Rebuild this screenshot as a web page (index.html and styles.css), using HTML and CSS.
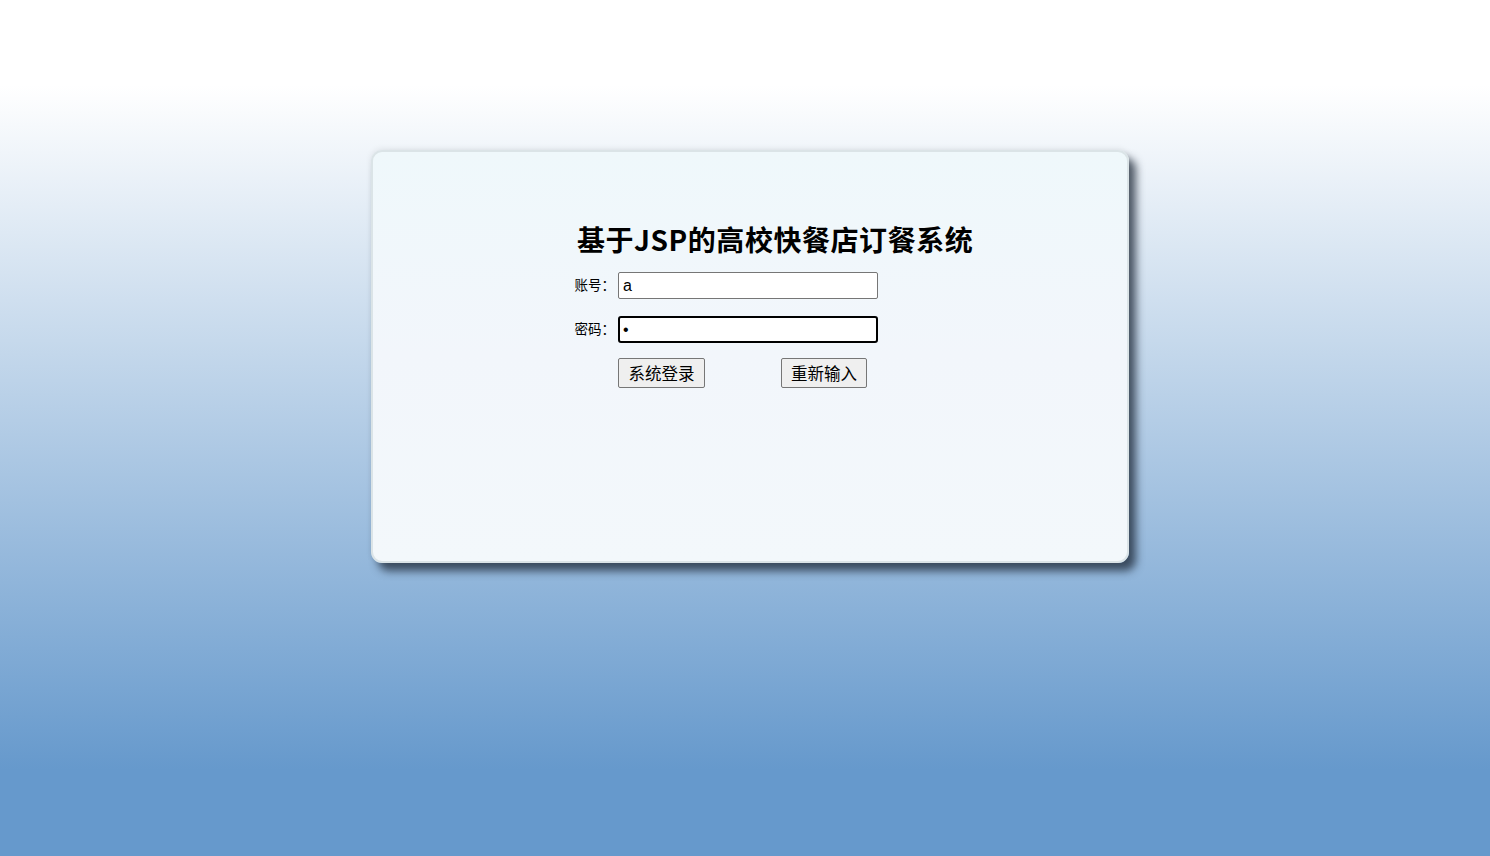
FILE: index.html
```html
<!DOCTYPE html>
<html lang="zh-CN">
<head>
<meta charset="utf-8">
<title>基于JSP的高校快餐店订餐系统</title>
<link rel="stylesheet" href="styles.css">
</head>
<body>
<div class="page">
  <div class="card">
    <h1 class="title">基于JSP的高校快餐店订餐系统</h1>
    <form class="form">
      <label class="label" for="user">账号：</label>
      <input class="field" id="user" type="text" value="a">
      <label class="label" for="pwd">密码：</label>
      <input class="field focused" id="pwd" type="password" value="a">
      <span></span>
      <div class="actions">
        <button class="btn" type="button">系统登录</button>
        <button class="btn" type="reset">重新输入</button>
      </div>
    </form>
  </div>
</div>
</body>
</html>
```
FILE: styles.css
```css
html, body {
  margin: 0;
  padding: 0;
}
body {
  font-family: "Noto Sans CJK SC", "Liberation Sans", sans-serif;
  background: linear-gradient(to bottom, #ffffff 0px, #ffffff 85px, #6699cc 770px, #6699cc 856px);
  min-height: 856px;
}
.page {
  height: 856px;
  padding-top: 150px;
  box-sizing: border-box;
}
.card {
  margin-left: 371px;
  width: 758px;
  height: 413px;
  box-sizing: border-box;
  border: 2px solid #dbe4e7;
  border-radius: 11px;
  background: linear-gradient(to bottom, #eff8fb 0%, #f2f6fb 50%, #f3f8fb 100%);
  box-shadow: 7px 8px 8px rgba(30, 40, 55, 0.75), 0 -1px 6px rgba(0, 0, 0, 0.08);
  padding-top: 69px;
}
.title {
  margin: 0;
  padding-left: 204px;
  font-size: 28px;
  line-height: 36px;
  font-weight: bold;
  color: #000;
  letter-spacing: 0.55px;
  white-space: nowrap;
}
.form {
  margin-top: 15px;
  margin-left: 195px;
  display: grid;
  grid-template-columns: 50px 260px;
  row-gap: 17px;
  align-items: center;
}
.label {
  font-size: 13.5px;
  color: #000;
  text-align: right;
  padding-right: 3px;
  padding-bottom: 3px;
  white-space: nowrap;
  line-height: 16px;
}
.field {
  width: 260px;
  height: 27px;
  box-sizing: border-box;
  border: 1px solid #767676;
  border-radius: 2px;
  background: #fff;
  font-family: "Liberation Sans", "Noto Sans CJK SC", sans-serif;
  font-size: 16px;
  padding: 1px 4px;
  margin: 0;
  color: #000;
}
.field.focused {
  border: 2px solid #000;
  border-radius: 3px;
  padding: 0 3px;
}
.actions {
  display: flex;
  gap: 76px;
  margin-top: -2px;
}
.btn {
  width: 87px;
  height: 30px;
  box-sizing: border-box;
  background: #efefef;
  border: 1px solid #767676;
  border-radius: 2px;
  font-family: "Noto Sans CJK SC", sans-serif;
  font-size: 16.5px;
  padding: 0;
  color: #000;
  margin: 0;
}
.actions .btn + .btn {
  width: 86px;
}
```
